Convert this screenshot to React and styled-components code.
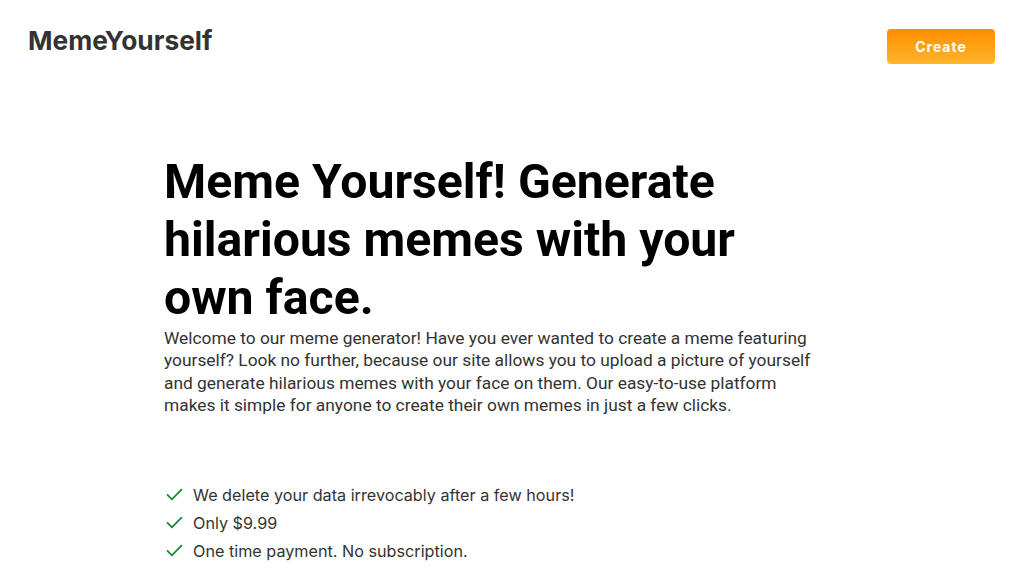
import styled, { createGlobalStyle } from "styled-components";

const GlobalStyle = createGlobalStyle`
  body {
    margin: 0;
    background: #fff;
    font-family: "Inter", "Liberation Sans", sans-serif;
  }
`;

const Header = styled.header`
  display: flex;
  justify-content: space-between;
  align-items: flex-start;
  padding: 22px 29px 0 28px;
`;

const Logo = styled.div`
  margin-top: 3px;
  font-family: "Inter", sans-serif;
  font-size: 26.3px;
  font-weight: 700;
  color: #333;
`;

const Button = styled.button`
  margin-top: 7px;
  width: 108px;
  height: 35px;
  border: none;
  border-radius: 4px;
  background-image: linear-gradient(to bottom, #ff8c00 0%, #ffb62b 100%);
  color: #fff;
  font-family: "Inter", sans-serif;
  font-size: 14px;
  font-weight: 700;
  letter-spacing: 1px;
  cursor: pointer;
`;

const Main = styled.main`
  padding: 89px 0 0 164px;
  max-width: 660px;
`;

const Title = styled.h1`
  margin: 0;
  font-family: "Roboto", sans-serif;
  font-size: 48.2px;
  font-weight: 700;
  line-height: 58px;
  color: #000;
`;

const Text = styled.p`
  margin: 0;
  font-family: "Roboto", sans-serif;
  font-size: 17.35px;
  line-height: 22.4px;
  color: #333;
`;

const List = styled.ul`
  list-style: none;
  margin: 64px 0 0;
  padding: 0;
`;

const Item = styled.li`
  display: flex;
  align-items: center;
  gap: 8px;
  height: 28px;
  font-family: "Inter", sans-serif;
  font-size: 16.2px;
  color: #333;
`;

const Check = () => (
  <svg width="21" height="21" viewBox="0 0 24 24" fill="none" stroke="#1e8a3c" strokeWidth="2.1" strokeLinecap="round" strokeLinejoin="round">
    <path d="M4 12.5l5 5L20 6.5" />
  </svg>
);

const features = [
  "We delete your data irrevocably after a few hours!",
  "Only $9.99",
  "One time payment. No subscription.",
];

const App = () => {
  return (
    <>
      <GlobalStyle />
      <Header>
        <Logo>MemeYourself</Logo>
        <Button>Create</Button>
      </Header>
      <Main>
        <Title>Meme Yourself! Generate hilarious memes with your own face.</Title>
        <Text>
          Welcome to our meme generator! Have you ever wanted to create a meme
          featuring yourself? Look no further, because our site allows you to
          upload a picture of yourself and generate hilarious memes with your
          face on them. Our easy-to-use platform makes it simple for anyone to
          create their own memes in just a few clicks.
        </Text>
        <List>
          {features.map((f) => (
            <Item key={f}>
              <Check />
              {f}
            </Item>
          ))}
        </List>
      </Main>
    </>
  );
};

export default App;
